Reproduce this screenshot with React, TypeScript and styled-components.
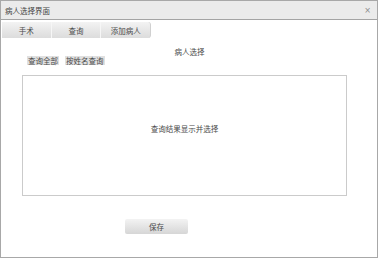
import React from "react";
import styled, { createGlobalStyle } from "styled-components";

const GlobalStyle = createGlobalStyle`
  html, body {
    margin: 0;
    padding: 0;
    background: #ffffff;
  }
  body {
    font-family: "Noto Sans CJK SC", "Noto Sans", sans-serif;
    color: #4a4a4a;
  }
`;

const Window = styled.div`
  width: 378px;
  height: 258px;
  box-sizing: border-box;
  border: 1px solid #a8a8a8;
  display: flex;
  flex-direction: column;
  background: #ffffff;
  font-size: 7.5px;
  line-height: 9px;
`;

const TitleBar = styled.div`
  height: 18px;
  flex: none;
  display: flex;
  align-items: center;
  justify-content: space-between;
  padding: 0 6px 0 4px;
  background: #ebebeb;
  border-bottom: 1px solid #a4a4a4;
`;

const Title = styled.span`
  color: #444444;
`;

const Close = styled.span`
  color: #8a8a8a;
  font-family: "DejaVu Sans", sans-serif;
  font-size: 8px;
`;

const Tabs = styled.div`
  display: flex;
  margin: 2px 0 0 1px;
  height: 16px;
`;

const Tab = styled.div<{ $last?: boolean }>`
  width: 49.7px;
  height: 16px;
  display: flex;
  align-items: center;
  justify-content: center;
  background: linear-gradient(#f3f3f3, #dcdcdc);
  border-right: 1px solid ${(p) => (p.$last ? "#d0d0d0" : "#f6f6f6")};
  border-radius: ${(p) => (p.$last ? "0 3px 3px 0" : "0")};
  box-sizing: border-box;
  color: #4a4a4a;
`;

const Heading = styled.div`
  text-align: center;
  margin-top: 9px;
  padding-left: 1px;
`;

const ActionRow = styled.div`
  display: flex;
  gap: 6px;
  margin: 0 0 0 26px;
`;

const SmallButton = styled.span`
  background: #e0e0e0;
  padding: 0 1px;
  height: 9px;
  display: flex;
  align-items: center;
  color: #4a4a4a;
`;

const ResultBox = styled.div`
  margin: 10px 30px 0 21px;
  height: 121px;
  box-sizing: border-box;
  border: 1px solid #cbcbcb;
  text-align: center;
  padding-top: 48px;
`;

const SaveButton = styled.div`
  margin: 23px 0 0 124px;
  width: 63px;
  height: 15px;
  display: flex;
  align-items: center;
  justify-content: center;
  background: linear-gradient(#f3f3f3, #d6d6d6);
  border-radius: 2px;
  color: #4a4a4a;
`;

export default function App() {
  return (
    <>
      <GlobalStyle />
      <Window>
        <TitleBar>
          <Title>病人选择界面</Title>
          <Close>×</Close>
        </TitleBar>
        <Tabs>
          <Tab>手术</Tab>
          <Tab>查询</Tab>
          <Tab $last>添加病人</Tab>
        </Tabs>
        <Heading>病人选择</Heading>
        <ActionRow>
          <SmallButton>查询全部</SmallButton>
          <SmallButton>按姓名查询</SmallButton>
        </ActionRow>
        <ResultBox>查询结果显示并选择</ResultBox>
        <SaveButton>保存</SaveButton>
      </Window>
    </>
  );
}
